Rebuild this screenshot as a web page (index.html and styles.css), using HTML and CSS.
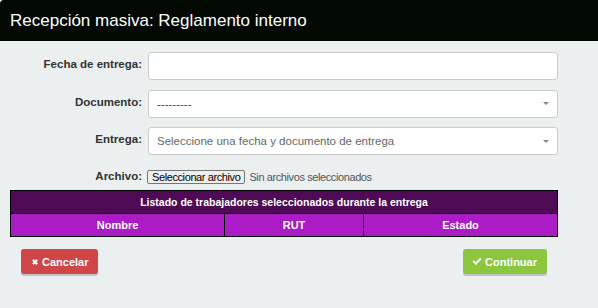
FILE: index.html
```html
<!DOCTYPE html>
<html lang="es">
<head>
<meta charset="utf-8">
<title>Recepción masiva</title>
<link rel="stylesheet" href="styles.css">
</head>
<body>
<div class="modal">
  <div class="modal-header">Recepción masiva: Reglamento interno</div>
  <div class="modal-body">
    <div class="form-row">
      <label class="label">Fecha de entrega:</label>
      <div class="control"></div>
    </div>
    <div class="form-row">
      <label class="label">Documento:</label>
      <div class="control select">
        <span class="value">---------</span>
        <span class="caret"></span>
      </div>
    </div>
    <div class="form-row">
      <label class="label">Entrega:</label>
      <div class="control select">
        <span class="value placeholder">Seleccione una fecha y documento de entrega</span>
        <span class="caret"></span>
      </div>
    </div>
    <div class="form-row file-row">
      <label class="label">Archivo:</label>
      <div class="file">
        <span class="file-btn">Seleccionar archivo</span>
        <span class="file-name">Sin archivos seleccionados</span>
      </div>
    </div>
    <table class="workers">
      <thead>
        <tr class="title-row"><th colspan="3">Listado de trabajadores seleccionados durante la entrega</th></tr>
        <tr class="cols-row"><th class="c-nombre">Nombre</th><th class="c-rut">RUT</th><th class="c-estado">Estado</th></tr>
      </thead>
    </table>
    <div class="actions">
      <button class="btn btn-danger"><svg class="ico ico-x" viewBox="0 0 10 10"><path d="M1.4 3.2 3.2 1.4 5 3.2 6.8 1.4 8.6 3.2 6.8 5 8.6 6.8 6.8 8.6 5 6.8 3.2 8.6 1.4 6.8 3.2 5Z" fill="#fff"/></svg>Cancelar</button>
      <button class="btn btn-success"><svg class="ico ico-check" viewBox="0 0 12 10"><path d="M0.6 5.3 2.3 3.6 4.5 5.8 9.7 0.6 11.4 2.3 4.5 9.2Z" fill="#fff"/></svg>Continuar</button>
    </div>
  </div>
</div>
</body>
</html>
```
FILE: styles.css
```css
html, body {
  margin: 0;
  padding: 0;
}
body {
  background: #ebeff0;
  font-family: "Liberation Sans", Arial, sans-serif;
  color: #333;
  width: 598px;
  height: 308px;
  overflow: hidden;
}
.modal-header {
  height: 41px;
  background: #010902;
  color: #fff;
  font-size: 17px;
  display: flex;
  align-items: center;
  padding: 0 10px;
  border-top-left-radius: 4px;
}
.modal-body {
  padding: 11px 40px 0 10px;
}
.form-row {
  display: flex;
  margin-bottom: 9.5px;
}
.label {
  width: 132px;
  flex: none;
  text-align: right;
  font-size: 11.5px;
  font-weight: bold;
  line-height: 17px;
  padding-top: 4px;
  margin-right: 6px;
  color: #333;
}
.control {
  flex: 1;
  height: 28px;
  box-sizing: border-box;
  background: #fff;
  border: 1px solid #ccc;
  border-radius: 3px;
  display: flex;
  align-items: center;
  padding: 0 8px;
  font-size: 11.5px;
  color: #444;
}
.select .value {
  flex: 1;
}
.select .placeholder {
  color: #666;
}
.caret {
  width: 0;
  height: 0;
  border-left: 3px solid transparent;
  border-right: 3px solid transparent;
  border-top: 3px solid #888;
}
.file-row {
  margin-top: 13px;
  margin-bottom: 5px;
  align-items: center;
}
.file-row .label {
  padding-top: 0;
  margin-right: 5px;
}
.file {
  display: flex;
  align-items: center;
  font-size: 11px;
  letter-spacing: -0.4px;
}
.file-btn {
  border: 1px solid #767676;
  background: #efefef;
  border-radius: 2px;
  padding: 0 4px;
  line-height: 12px;
  height: 12px;
  color: #000;
}
.file-name {
  margin-left: 4px;
  color: #555;
}
.workers {
  width: 548px;
  border-collapse: collapse;
  border: 1px solid #000;
}
.workers th {
  color: #fff;
  font-weight: bold;
  border: 1px solid #000;
  padding: 0;
  height: 22px;
  text-align: center;
}
.title-row th {
  background: #4f0a55;
  font-size: 10.5px;
}
.cols-row th {
  background: #ab1bc6;
  font-size: 11px;
}
.c-nombre { width: 213px; }
.c-rut { width: 138px; }
.actions {
  display: flex;
  justify-content: space-between;
  padding: 12px 11px 0;
}
.btn {
  height: 25px;
  border: none;
  border-radius: 3px;
  color: #fff;
  font-family: "Liberation Sans", Arial, sans-serif;
  font-size: 11px;
  font-weight: bold;
  padding: 0 10px;
  display: flex;
  align-items: center;
  gap: 3px;
  box-shadow: 0 2px 0 rgba(0, 0, 0, 0.18);
}
.btn-danger {
  background: #cf4548;
}
.btn-success {
  background: #8cc63e;
  padding-left: 9px;
}
.ico-x {
  width: 8px;
  height: 8px;
}
.ico-check {
  width: 10px;
  height: 9px;
}
```
